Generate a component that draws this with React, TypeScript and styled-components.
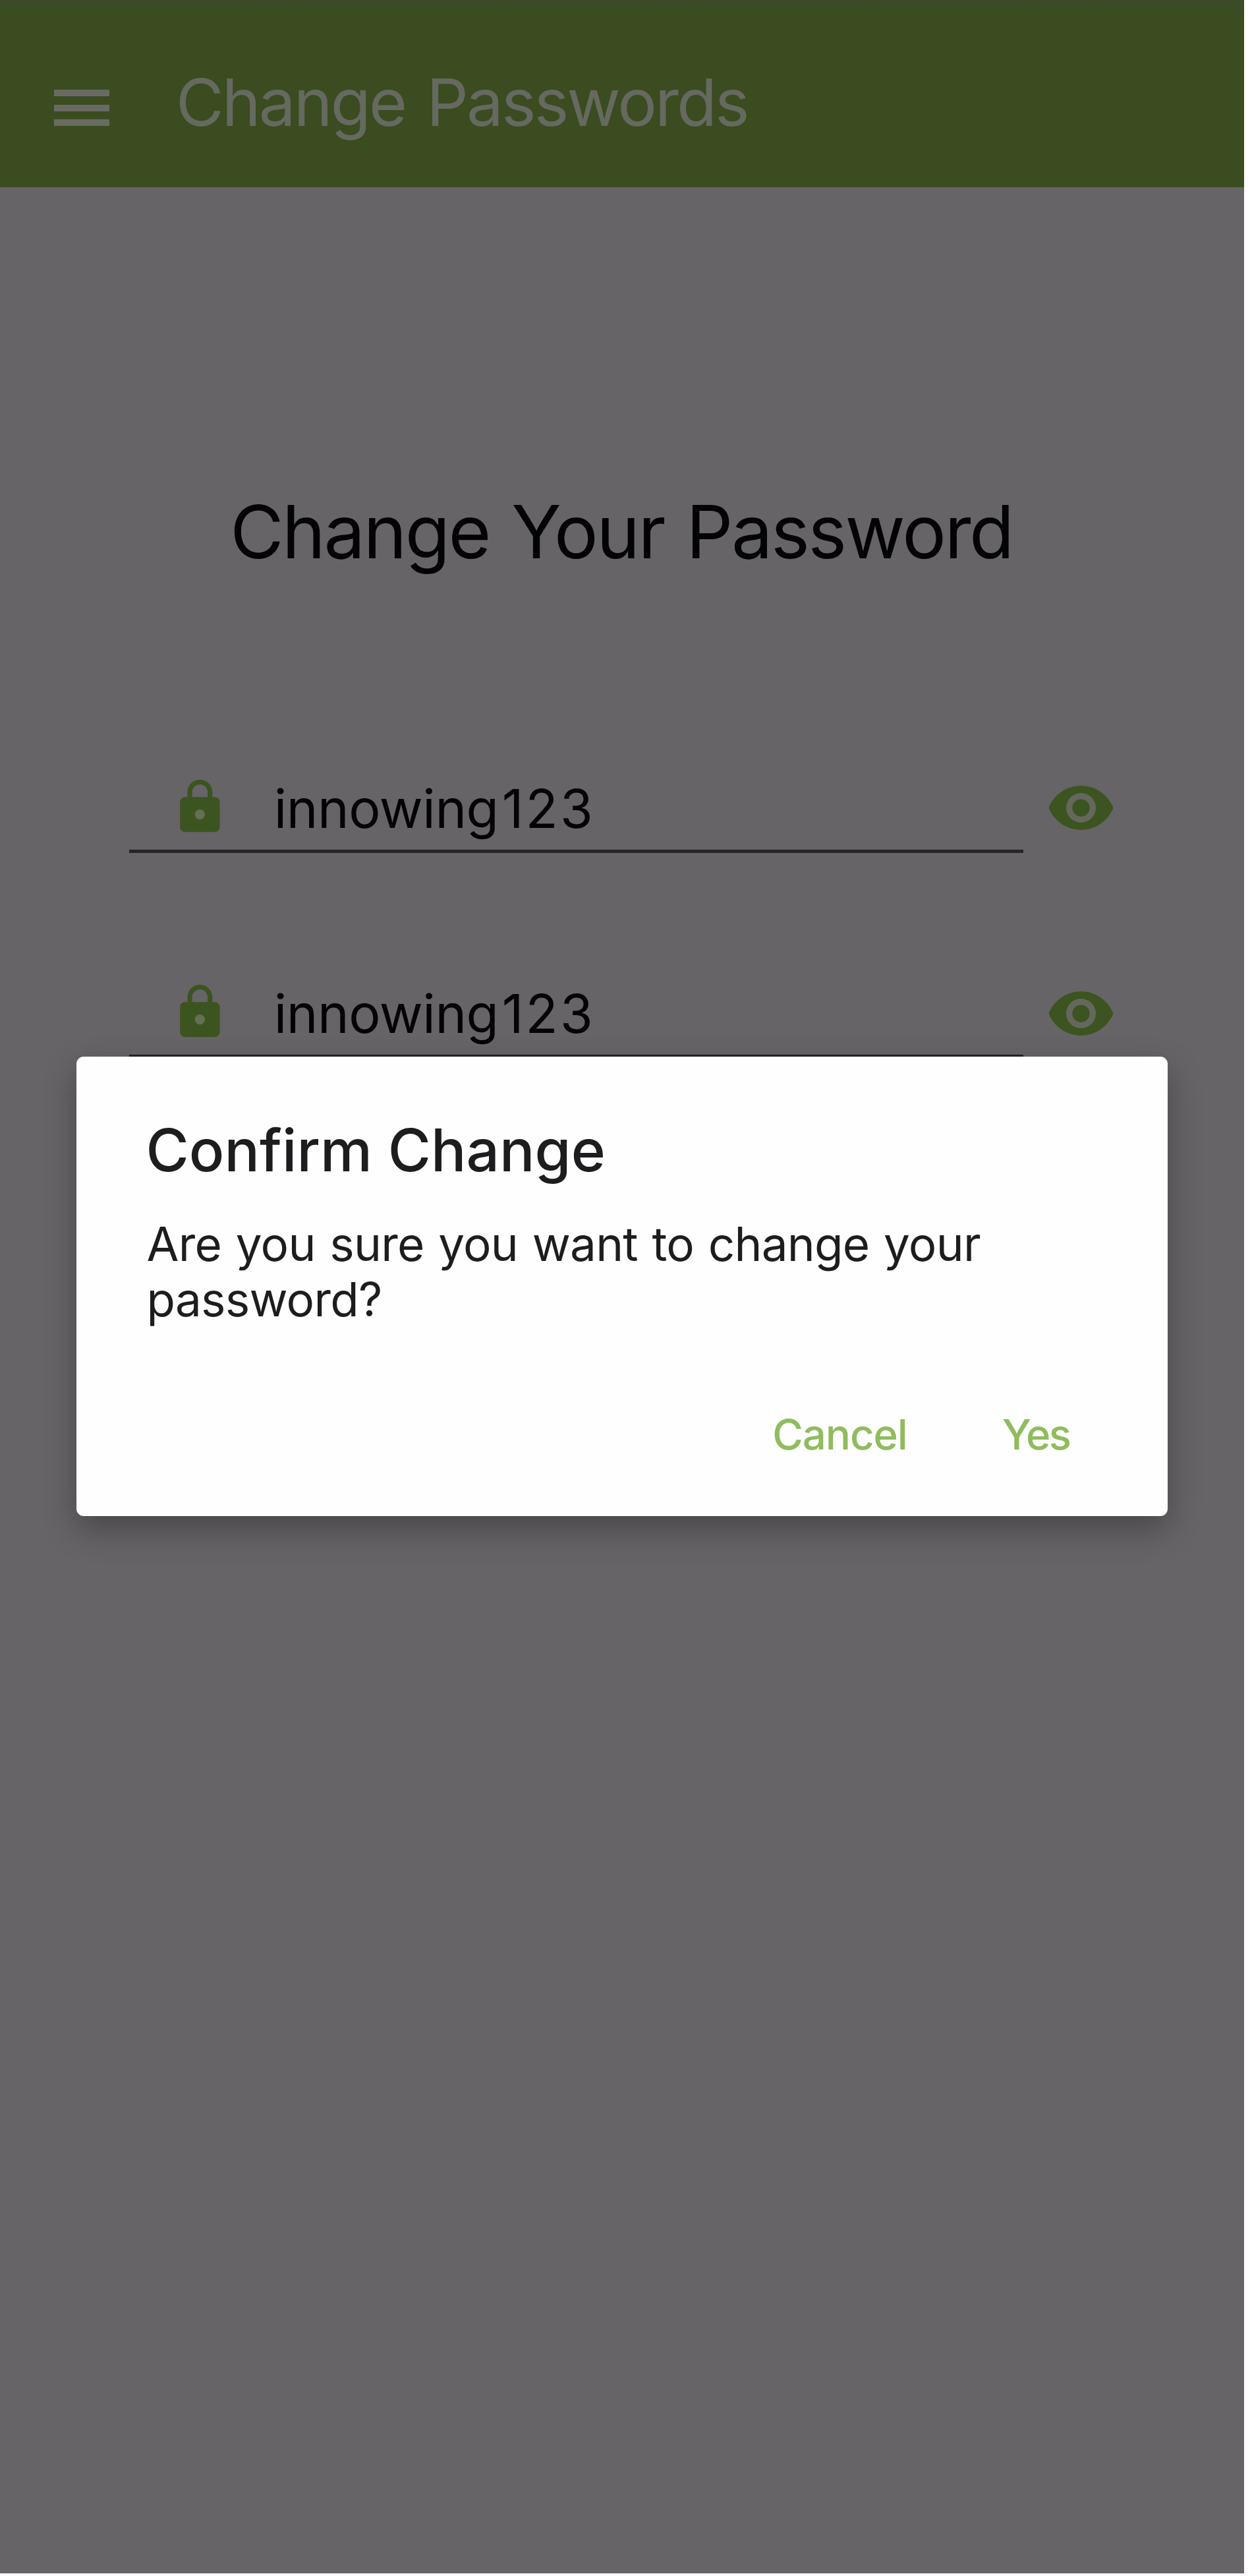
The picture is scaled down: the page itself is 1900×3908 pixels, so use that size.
import React from "react";
import styled, { createGlobalStyle } from "styled-components";

const GlobalStyle = createGlobalStyle`
  *, *::before, *::after { box-sizing: border-box; }
  body { margin: 0; background: #ffffff; }
`;

const Screen = styled.div`
  position: relative;
  width: 1888px;
  height: 3904px;
  overflow: hidden;
  background: #666467;
  color: #030204;
  font-family: Inter, "Liberation Sans", sans-serif;
`;

const AppBar = styled.header`
  display: flex;
  align-items: flex-start;
  height: 284px;
  padding: 94px 0 0 82px;
  background: linear-gradient(#41482c 0, #3b4b26 5px, #3a4c20 22px, #3a4c20 100%);
  color: #66695f;
`;

const MenuButton = styled.button`
  display: flex;
  flex-direction: column;
  justify-content: space-between;
  width: 84px;
  height: 55px;
  margin: 42px 101px 0 0;
  padding: 0;
  border: 0;
  background: none;
`;

const MenuBar = styled.span`
  height: 10px;
  background: #696b63;
`;

const AppTitle = styled.h1`
  margin: 0;
  font-size: 99.6px;
  font-weight: 400;
  line-height: 122px;
  letter-spacing: -2.9px;
  word-spacing: 7px;
  white-space: nowrap;
`;

const Form = styled.main`
  display: flex;
  flex-direction: column;
  padding: 458px 0 0 196px;
`;

const Heading = styled.h2`
  margin: 0 0 288px -198px;
  font-size: 111.4px;
  font-weight: 400;
  line-height: 130px;
  letter-spacing: -2.5px;
  word-spacing: 4.5px;
  text-align: center;
  white-space: nowrap;
`;

const Row = styled.div`
  display: flex;
  align-items: flex-start;
  gap: 34px;
  margin-bottom: 178px;
`;

const Field = styled.div`
  display: flex;
  align-items: center;
  width: 1357px;
  height: 133.5px;
  padding-left: 62px;
  border-bottom: 5.5px solid #262428;
`;

const Value = styled.span`
  margin: 5px 0 0 67px;
  font-size: 80.6px;
  line-height: 100px;
  letter-spacing: -0.4px;
`;

const Digits = styled.span`
  margin-left: 5px;
  letter-spacing: 3.2px;
`;

const Glyph = styled.svg<{ $size: number }>`
  display: block;
  flex: none;
  width: ${(p) => p.$size}px;
  height: ${(p) => p.$size}px;
  fill: #3c5420;
`;

const EyeButton = styled.button`
  margin: 12px 0 0;
  padding: 0;
  border: 0;
  background: none;
`;

const Overlay = styled.div`
  position: absolute;
  inset: 0;
  display: flex;
  align-items: center;
  justify-content: center;
`;

const Dialog = styled.section`
  width: 1656px;
  height: 697px;
  margin: -1px 1px 0 0;
  padding: 90px 107px 0;
  border-radius: 11px;
  background: #fefefe;
  box-shadow: 0 20px 50px rgba(0, 0, 0, 0.3);
  color: #1d1c1e;
`;

const DialogTitle = styled.h3`
  margin: 0 0 49px -1px;
  font-size: 88.8px;
  font-weight: 500;
  line-height: 104px;
  letter-spacing: 0.1px;
`;

const Message = styled.p`
  margin: 0;
  font-size: 71px;
  line-height: 83.6px;
  letter-spacing: -0.75px;
  word-spacing: 2.4px;
`;

const Actions = styled.div`
  display: flex;
  justify-content: flex-end;
  gap: 144px;
  margin-top: 123px;
  padding-right: 41px;
`;

const Action = styled.button<{ $spacing: number }>`
  padding: 0;
  border: 0;
  background: none;
  color: #90bc5d;
  font: 500 63.6px/80px Inter, "Liberation Sans", sans-serif;
  letter-spacing: ${(p) => p.$spacing}px;
`;

const LockIcon = () => (
  <Glyph viewBox="0 0 24 24" $size={90.7}>
    <path d="M18 8h-1V6c0-2.760-2.240-5-5-5S7 3.240 7 6v2H6c-1.100 0-2 .9-2 2v10c0 1.100.9 2 2 2h12c1.100 0 2-.9 2-2V10c0-1.100-.9-2-2-2zm-6 9c-1.100 0-2-.9-2-2s.9-2 2-2 2 .9 2 2-.9 2-2 2zm3.100-9H8.900V6c0-1.710 1.390-3.100 3.100-3.100s3.100 1.390 3.100 3.100v2z" />
    <circle cx="12" cy="15" r="1.9" fill="#647052" />
  </Glyph>
);

const EyeIcon = () => (
  <Glyph viewBox="0 0 24 24" $size={107}>
    <path d="M12 4.500C7 4.500 2.730 7.610 1 12c1.730 4.390 6 7.500 11 7.500s9.270-3.110 11-7.500c-1.730-4.390-6-7.500-11-7.500zM12 17c-2.760 0-5-2.240-5-5s2.240-5 5-5 5 2.240 5 5-2.240 5-5 5zm0-8c-1.660 0-3 1.340-3 3s1.340 3 3 3 3-1.340 3-3-1.340-3-3-3z" />
    <circle cx="12" cy="12" r="4" fill="none" stroke="#64685c" strokeWidth="2" />
  </Glyph>
);

const PasswordRow = ({ word, digits }: { word: string; digits: string }) => (
  <Row>
    <Field>
      <LockIcon />
      <Value>
        {word}
        <Digits>{digits}</Digits>
      </Value>
    </Field>
    <EyeButton aria-label="Show password">
      <EyeIcon />
    </EyeButton>
  </Row>
);

export default function App() {
  return (
    <>
      <GlobalStyle />
      <Screen>
        <AppBar>
          <MenuButton aria-label="Menu">
            <MenuBar />
            <MenuBar />
            <MenuBar />
          </MenuButton>
          <AppTitle>Change Passwords</AppTitle>
        </AppBar>
        <Form>
          <Heading>Change Your Password</Heading>
          <PasswordRow word="innowing" digits="123" />
          <PasswordRow word="innowing" digits="123" />
        </Form>
        <Overlay>
          <Dialog role="dialog">
            <DialogTitle>Confirm Change</DialogTitle>
            <Message>Are you sure you want to change your password?</Message>
            <Actions>
              <Action $spacing={-1.1}>Cancel</Action>
              <Action $spacing={-2.5}>Yes</Action>
            </Actions>
          </Dialog>
        </Overlay>
      </Screen>
    </>
  );
}
